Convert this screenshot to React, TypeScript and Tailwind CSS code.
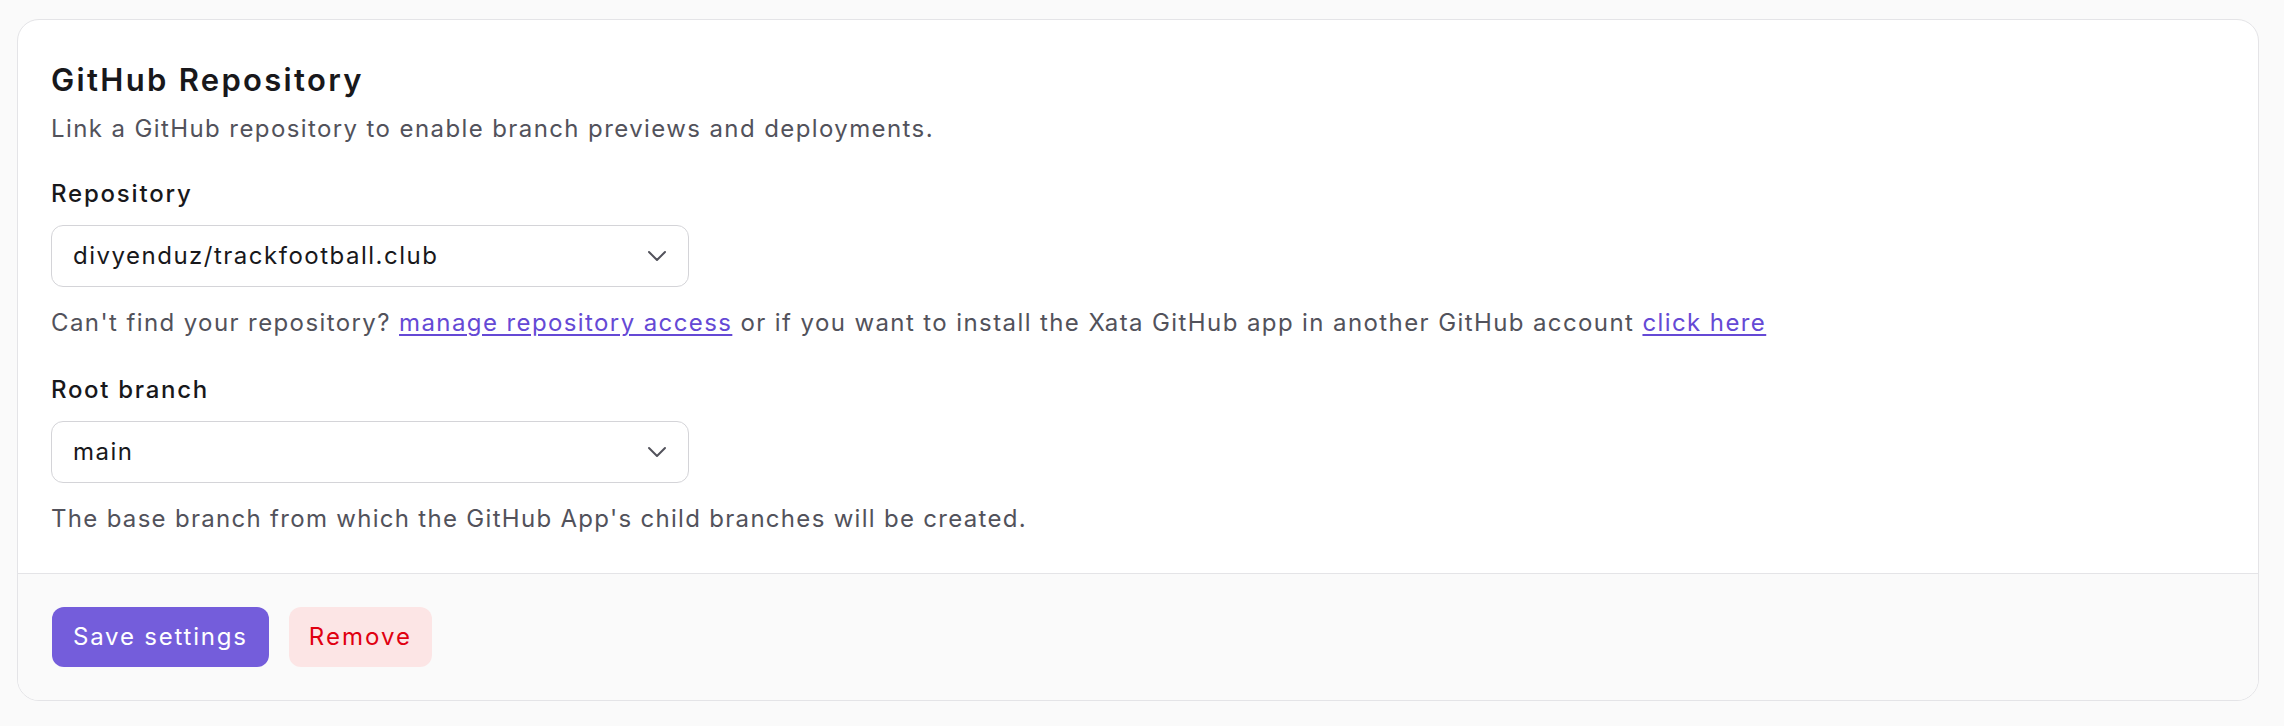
import React from 'react';
import { ChevronDown } from 'lucide-react';

function SelectBox({ value }: { value: string }) {
  return (
    <div className="mt-[13px] flex h-[62px] w-[638px] items-center justify-between rounded-[12px] border border-[#d4d4d8] bg-white pl-[21px] pr-[15px] text-[24px] tracking-[1.5px] text-[#18181b]">
      <span>{value}</span>
      <ChevronDown size={32} strokeWidth={1.5} className="text-[#52525b]" />
    </div>
  );
}

export default function App() {
  return (
    <div className="min-h-[726px] bg-[#fafafa] pt-[19px] pl-[17px] pr-[25px] pb-[24px] font-['Inter',sans-serif]">
      <div className="overflow-hidden rounded-[22px] border border-[#e4e4e7] bg-white">
        <div className="px-[33px] pt-[42px] pb-[36px]">
          <h2 className="text-[31px] leading-[36px] font-semibold tracking-[2.3px] text-[#18181b]">GitHub Repository</h2>
          <p className="mt-[13px] text-[24px] leading-[36px] tracking-[1.4px] text-[#52525b]">
            Link a GitHub repository to enable branch previews and deployments.
          </p>

          <label className="mt-[29px] block text-[24px] leading-[36px] font-medium tracking-[1.8px] text-[#18181b]">Repository</label>
          <SelectBox value="divyenduz/trackfootball.club" />
          <p className="mt-[18px] text-[24px] leading-[36px] tracking-[1.4px] text-[#52525b]">
            Can't find your repository?{' '}
            <a href="#" className="text-[#6549d5] underline underline-offset-[3px]">manage repository access</a>{' '}
            or if you want to install the Xata GitHub app in another GitHub account{' '}
            <a href="#" className="text-[#6549d5] underline underline-offset-[3px]">click here</a>
          </p>

          <label className="mt-[31px] block text-[24px] leading-[36px] font-medium tracking-[1.7px] text-[#18181b]">Root branch</label>
          <SelectBox value="main" />
          <p className="mt-[18px] text-[24px] leading-[36px] tracking-[1.3px] text-[#52525b]">
            The base branch from which the GitHub App's child branches will be created.
          </p>
        </div>

        <div className="flex items-center gap-[20px] border-t border-[#e4e4e7] bg-[#fafafa] pl-[34px] py-[33px]">
          <button className="h-[60px] rounded-[12px] bg-[#745ddb] px-[21px] text-[24px] tracking-[1.8px] text-white">Save settings</button>
          <button className="h-[60px] rounded-[12px] bg-[#fce5e5] px-[20px] text-[24px] tracking-[2px] text-[#e00010]">Remove</button>
        </div>
      </div>
    </div>
  );
}
